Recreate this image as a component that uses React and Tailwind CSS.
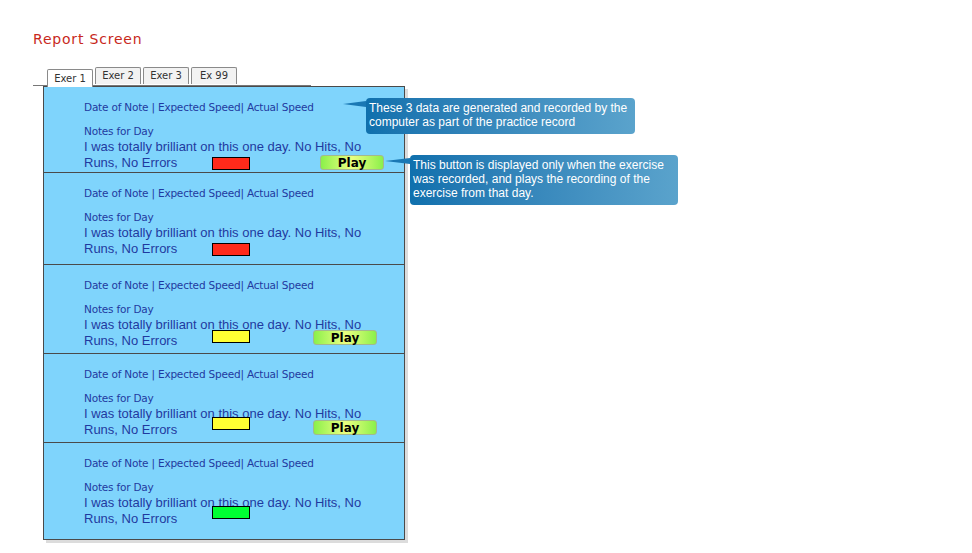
import React from 'react';

// swatch + play button sit over the note text, so they're overlays
const ROWS = [
  { h: 86, swatch: 'bg-[#ff2a1a]', swatchTop: 70, play: { left: 276, top: 68 } },
  { h: 92, swatch: 'bg-[#ff2a1a]', swatchTop: 70, play: null },
  { h: 89, swatch: 'bg-[#ffff33]', swatchTop: 65, play: { left: 269, top: 65 } },
  { h: 89, swatch: 'bg-[#ffff33]', swatchTop: 63, play: { left: 269, top: 66 } },
  { h: 96, swatch: 'bg-[#00ff33]', swatchTop: 63, play: null },
];

const TABS = ['Exer 1', 'Exer 2', 'Exer 3', 'Ex 99'];

function PlayButton({ style }) {
  return (
    <div
      style={style}
      className="absolute w-[64px] h-[15px] rounded-[3px] border border-[#a3b890] bg-gradient-to-r from-[#8af04a] via-[#eaff80] to-[#8af04a] flex items-center justify-center text-[12px] font-bold text-black leading-none font-['DejaVu_Sans',sans-serif]"
    >
      Play
    </div>
  );
}

function NoteRow({ row, last }) {
  return (
    <div
      style={{ height: row.h }}
      className={`relative pl-[40px] pt-[14px] ${last ? '' : 'border-b border-[#4a4a4a]'}`}
    >
      <div className="text-[10.5px] leading-[13px] text-[#1f3aa0] font-['DejaVu_Sans',sans-serif] tracking-[-0.2px]">
        Date of Note | Expected Speed| Actual Speed
      </div>
      <div className="mt-[11px] text-[10.5px] leading-[13px] text-[#1f3aa0] font-['DejaVu_Sans',sans-serif] tracking-[-0.2px]">
        Notes for Day
      </div>
      <div className="mt-[1px] w-[290px] text-[13px] leading-[16px] text-[#1f3aa0] font-['Liberation_Sans',Arial,sans-serif]">
        I was totally brilliant on this one day. No Hits, No Runs, No Errors
      </div>
      <div
        style={{ top: row.swatchTop }}
        className={`absolute left-[168px] w-[38px] h-[13px] border border-black ${row.swatch}`}
      />
      {row.play && <PlayButton style={{ left: row.play.left, top: row.play.top }} />}
    </div>
  );
}

function Callout({ children, className, pointerWidth }) {
  return (
    <div className={`absolute flex items-start ${className}`}>
      <svg width={pointerWidth} height="10" className="mt-[1px] shrink-0">
        <polygon points={`0,5 ${pointerWidth},2 ${pointerWidth},8`} fill="#1a78b4" />
      </svg>
      <div className="rounded-[4px] bg-gradient-to-r from-[#0f70ad] to-[#5aa3cc] px-[3px] pt-[3px] pb-[5px] text-white text-[12px] leading-[14px] font-['Liberation_Sans',Arial,sans-serif]">
        {children}
      </div>
    </div>
  );
}

export default function App() {
  return (
    <div className="relative w-[972px] h-[553px] bg-white overflow-hidden">
      <div className="pl-[33px] pt-[31px] text-[14px] leading-[17px] text-[#c8281c] tracking-[0.8px] font-['DejaVu_Sans',sans-serif]">
        Report Screen
      </div>

      <div className="relative ml-[33px] mt-[18px] w-[278px] h-[20px] border-b border-[#777]">
        <div className="flex items-end pl-[14px] gap-[2px] h-full">
          {TABS.map((t, i) => (
            <div
              key={t}
              className={`w-[46px] border border-[#8a8a8a] border-b-0 rounded-t-[2px] text-center text-[10px] text-[#333] font-['DejaVu_Sans',sans-serif] ${
                i === 0 ? 'h-[18px] bg-white leading-[17px] -mb-[1px] relative top-[1px]' : 'h-[17px] bg-[#f2f2f2] leading-[15px] mb-[1px]'
              }`}
            >
              {t}
            </div>
          ))}
        </div>
      </div>

      <div className="ml-[43px] w-[362px] border border-[#4a4a4a] bg-[#7fd4fc] shadow-[3px_3px_0_#dcdcdc]">
        {ROWS.map((row, i) => (
          <NoteRow key={i} row={row} last={i === ROWS.length - 1} />
        ))}
      </div>

      <Callout className="left-[343px] top-[98px] w-[300px]" pointerWidth={23}>
        <div className="w-[263px]">
          These 3 data are generated and recorded by the computer as part of the practice record
        </div>
      </Callout>

      <Callout className="left-[385px] top-[155px] w-[300px]" pointerWidth={25}>
        <div className="w-[262px]">
          This button is displayed only when the exercise was recorded, and plays the recording of the exercise from that day.
        </div>
      </Callout>
    </div>
  );
}
